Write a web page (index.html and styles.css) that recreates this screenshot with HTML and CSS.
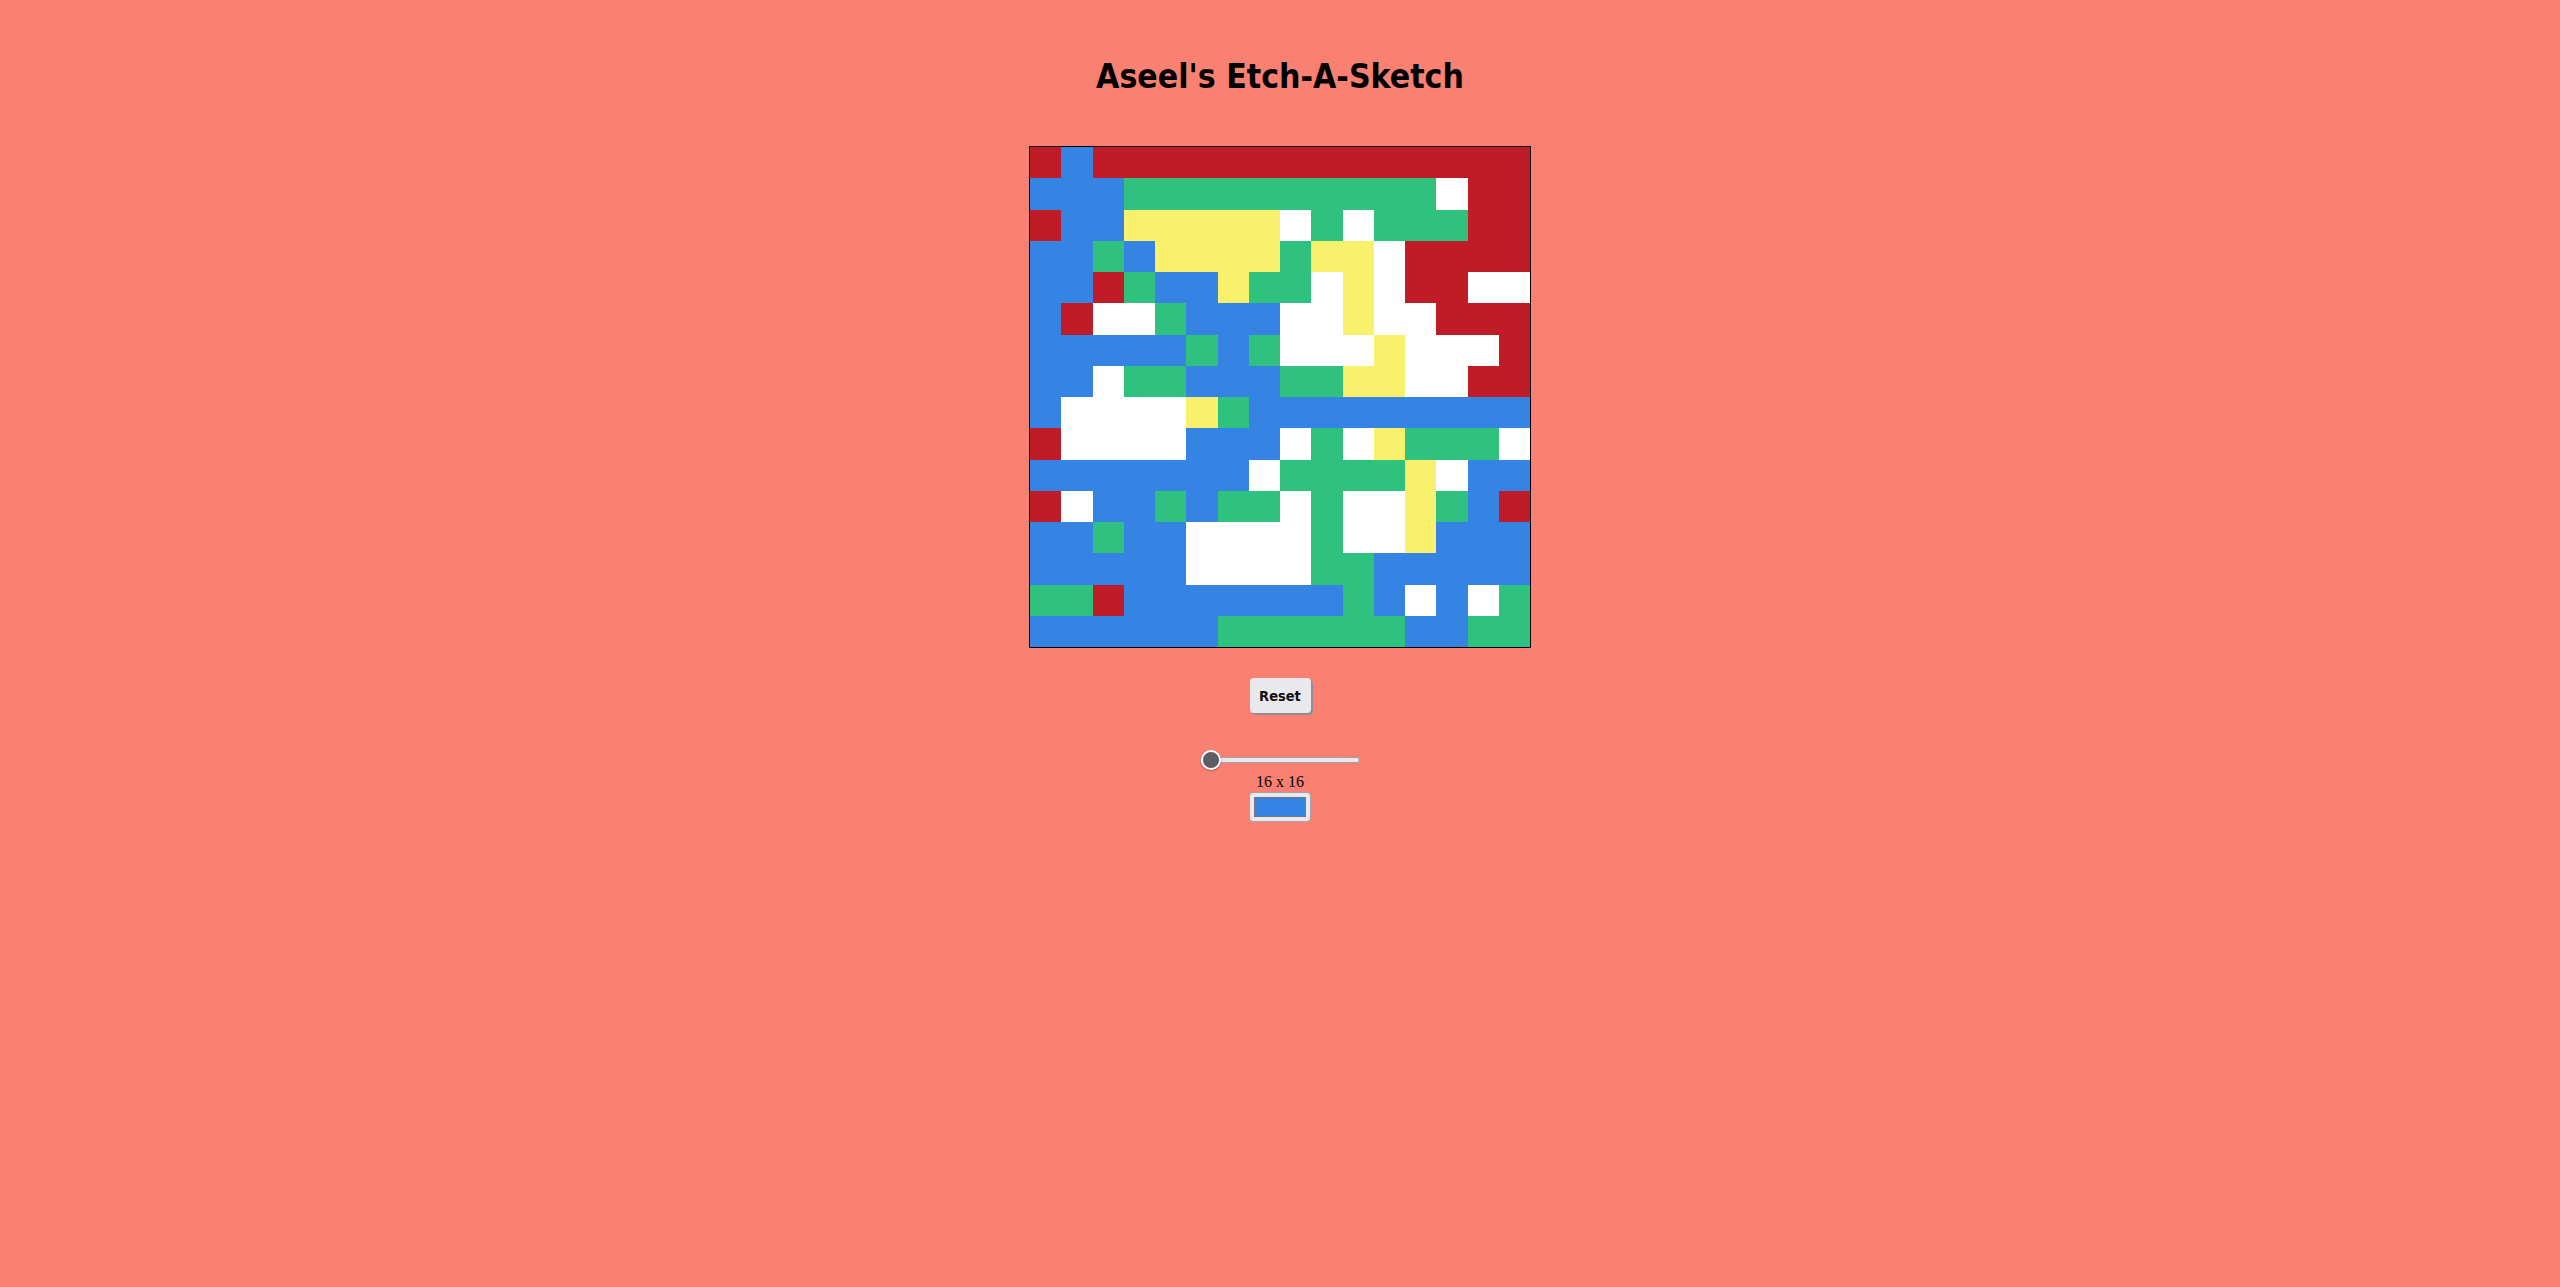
FILE: index.html
```html
<!DOCTYPE html>
<html lang="en">
<head>
<meta charset="utf-8">
<title>Etch-A-Sketch</title>
<link rel="stylesheet" href="styles.css">
</head>
<body>
<main class="page">
  <h1 class="title">Aseel's Etch-A-Sketch</h1>
  <div class="board">
    <div class="r"></div><div class="b"></div><div class="r"></div><div class="r"></div><div class="r"></div><div class="r"></div><div class="r"></div><div class="r"></div><div class="r"></div><div class="r"></div><div class="r"></div><div class="r"></div><div class="r"></div><div class="r"></div><div class="r"></div><div class="r"></div>
    <div class="b"></div><div class="b"></div><div class="b"></div><div class="g"></div><div class="g"></div><div class="g"></div><div class="g"></div><div class="g"></div><div class="g"></div><div class="g"></div><div class="g"></div><div class="g"></div><div class="g"></div><div class="w"></div><div class="r"></div><div class="r"></div>
    <div class="r"></div><div class="b"></div><div class="b"></div><div class="y"></div><div class="y"></div><div class="y"></div><div class="y"></div><div class="y"></div><div class="w"></div><div class="g"></div><div class="w"></div><div class="g"></div><div class="g"></div><div class="g"></div><div class="r"></div><div class="r"></div>
    <div class="b"></div><div class="b"></div><div class="g"></div><div class="b"></div><div class="y"></div><div class="y"></div><div class="y"></div><div class="y"></div><div class="g"></div><div class="y"></div><div class="y"></div><div class="w"></div><div class="r"></div><div class="r"></div><div class="r"></div><div class="r"></div>
    <div class="b"></div><div class="b"></div><div class="r"></div><div class="g"></div><div class="b"></div><div class="b"></div><div class="y"></div><div class="g"></div><div class="g"></div><div class="w"></div><div class="y"></div><div class="w"></div><div class="r"></div><div class="r"></div><div class="w"></div><div class="w"></div>
    <div class="b"></div><div class="r"></div><div class="w"></div><div class="w"></div><div class="g"></div><div class="b"></div><div class="b"></div><div class="b"></div><div class="w"></div><div class="w"></div><div class="y"></div><div class="w"></div><div class="w"></div><div class="r"></div><div class="r"></div><div class="r"></div>
    <div class="b"></div><div class="b"></div><div class="b"></div><div class="b"></div><div class="b"></div><div class="g"></div><div class="b"></div><div class="g"></div><div class="w"></div><div class="w"></div><div class="w"></div><div class="y"></div><div class="w"></div><div class="w"></div><div class="w"></div><div class="r"></div>
    <div class="b"></div><div class="b"></div><div class="w"></div><div class="g"></div><div class="g"></div><div class="b"></div><div class="b"></div><div class="b"></div><div class="g"></div><div class="g"></div><div class="y"></div><div class="y"></div><div class="w"></div><div class="w"></div><div class="r"></div><div class="r"></div>
    <div class="b"></div><div class="w"></div><div class="w"></div><div class="w"></div><div class="w"></div><div class="y"></div><div class="g"></div><div class="b"></div><div class="b"></div><div class="b"></div><div class="b"></div><div class="b"></div><div class="b"></div><div class="b"></div><div class="b"></div><div class="b"></div>
    <div class="r"></div><div class="w"></div><div class="w"></div><div class="w"></div><div class="w"></div><div class="b"></div><div class="b"></div><div class="b"></div><div class="w"></div><div class="g"></div><div class="w"></div><div class="y"></div><div class="g"></div><div class="g"></div><div class="g"></div><div class="w"></div>
    <div class="b"></div><div class="b"></div><div class="b"></div><div class="b"></div><div class="b"></div><div class="b"></div><div class="b"></div><div class="w"></div><div class="g"></div><div class="g"></div><div class="g"></div><div class="g"></div><div class="y"></div><div class="w"></div><div class="b"></div><div class="b"></div>
    <div class="r"></div><div class="w"></div><div class="b"></div><div class="b"></div><div class="g"></div><div class="b"></div><div class="g"></div><div class="g"></div><div class="w"></div><div class="g"></div><div class="w"></div><div class="w"></div><div class="y"></div><div class="g"></div><div class="b"></div><div class="r"></div>
    <div class="b"></div><div class="b"></div><div class="g"></div><div class="b"></div><div class="b"></div><div class="w"></div><div class="w"></div><div class="w"></div><div class="w"></div><div class="g"></div><div class="w"></div><div class="w"></div><div class="y"></div><div class="b"></div><div class="b"></div><div class="b"></div>
    <div class="b"></div><div class="b"></div><div class="b"></div><div class="b"></div><div class="b"></div><div class="w"></div><div class="w"></div><div class="w"></div><div class="w"></div><div class="g"></div><div class="g"></div><div class="b"></div><div class="b"></div><div class="b"></div><div class="b"></div><div class="b"></div>
    <div class="g"></div><div class="g"></div><div class="r"></div><div class="b"></div><div class="b"></div><div class="b"></div><div class="b"></div><div class="b"></div><div class="b"></div><div class="b"></div><div class="g"></div><div class="b"></div><div class="w"></div><div class="b"></div><div class="w"></div><div class="g"></div>
    <div class="b"></div><div class="b"></div><div class="b"></div><div class="b"></div><div class="b"></div><div class="b"></div><div class="g"></div><div class="g"></div><div class="g"></div><div class="g"></div><div class="g"></div><div class="g"></div><div class="b"></div><div class="b"></div><div class="g"></div><div class="g"></div>
  </div>
  <button class="reset" type="button">Reset</button>
  <input class="slider" type="range" min="16" max="100" value="16">
  <div class="size-label">16 x 16</div>
  <div class="color-pick"><span class="swatch"></span></div>
</main>
</body>
</html>
```

FILE: styles.css
```css
html, body {
  margin: 0;
  padding: 0;
  background: #fa8072;
}

.page {
  display: flex;
  flex-direction: column;
  align-items: center;
  padding-top: 52px;
}

.title {
  margin: 0;
  font-family: "DejaVu Sans Condensed", "DejaVu Sans", sans-serif;
  font-stretch: condensed;
  font-weight: 700;
  font-size: 33.5px;
  line-height: 49px;
  color: #000;
}

.board {
  margin-top: 45px;
  width: 500px;
  height: 500px;
  border: 1px solid #000;
  display: grid;
  grid-template-columns: repeat(16, 1fr);
  grid-template-rows: repeat(16, 1fr);
}

.r { background: #c01c28; }
.b { background: #3584e4; }
.g { background: #2ec27e; }
.y { background: #f9f06b; }
.w { background: #ffffff; }

.reset {
  margin-top: 30px;
  width: 61px;
  height: 35px;
  padding: 0;
  border: none;
  border-radius: 4px;
  background: #e8e8ed;
  box-shadow: 2px 2px 0 #8e8e96;
  font-family: "DejaVu Sans Condensed", "DejaVu Sans", sans-serif;
  font-stretch: condensed;
  font-weight: 700;
  font-size: 14.5px;
  color: #111;
}

.slider {
  -webkit-appearance: none;
  appearance: none;
  margin: 37px 0 0 0;
  width: 160px;
  height: 20px;
  background: transparent;
}

.slider::-webkit-slider-runnable-track {
  height: 6px;
  border-radius: 3px;
  background: #e8e8ee;
  border: 1px solid #a0a0aa;
  box-sizing: border-box;
}

.slider::-webkit-slider-thumb {
  -webkit-appearance: none;
  appearance: none;
  width: 20px;
  height: 20px;
  margin-top: -8px;
  border-radius: 50%;
  background: #5e5c64;
  border: 2px solid #ffffff;
  box-sizing: border-box;
  box-shadow: 0 1px 2px rgba(0,0,0,0.3);
}

.size-label {
  margin-top: 3px;
  font-family: "Liberation Serif", "Times New Roman", serif;
  font-size: 16px;
  line-height: 18px;
  color: #000;
}

.color-pick {
  margin-top: 1px;
  width: 62px;
  height: 30px;
  box-sizing: border-box;
  border: 1px solid #a0a0aa;
  border-radius: 4px;
  background: #e8e8ee;
  display: flex;
  align-items: center;
  justify-content: center;
}

.swatch {
  width: 52px;
  height: 20px;
  box-sizing: border-box;
  border: 1px solid #777777;
  background: #3584e4;
}
```
